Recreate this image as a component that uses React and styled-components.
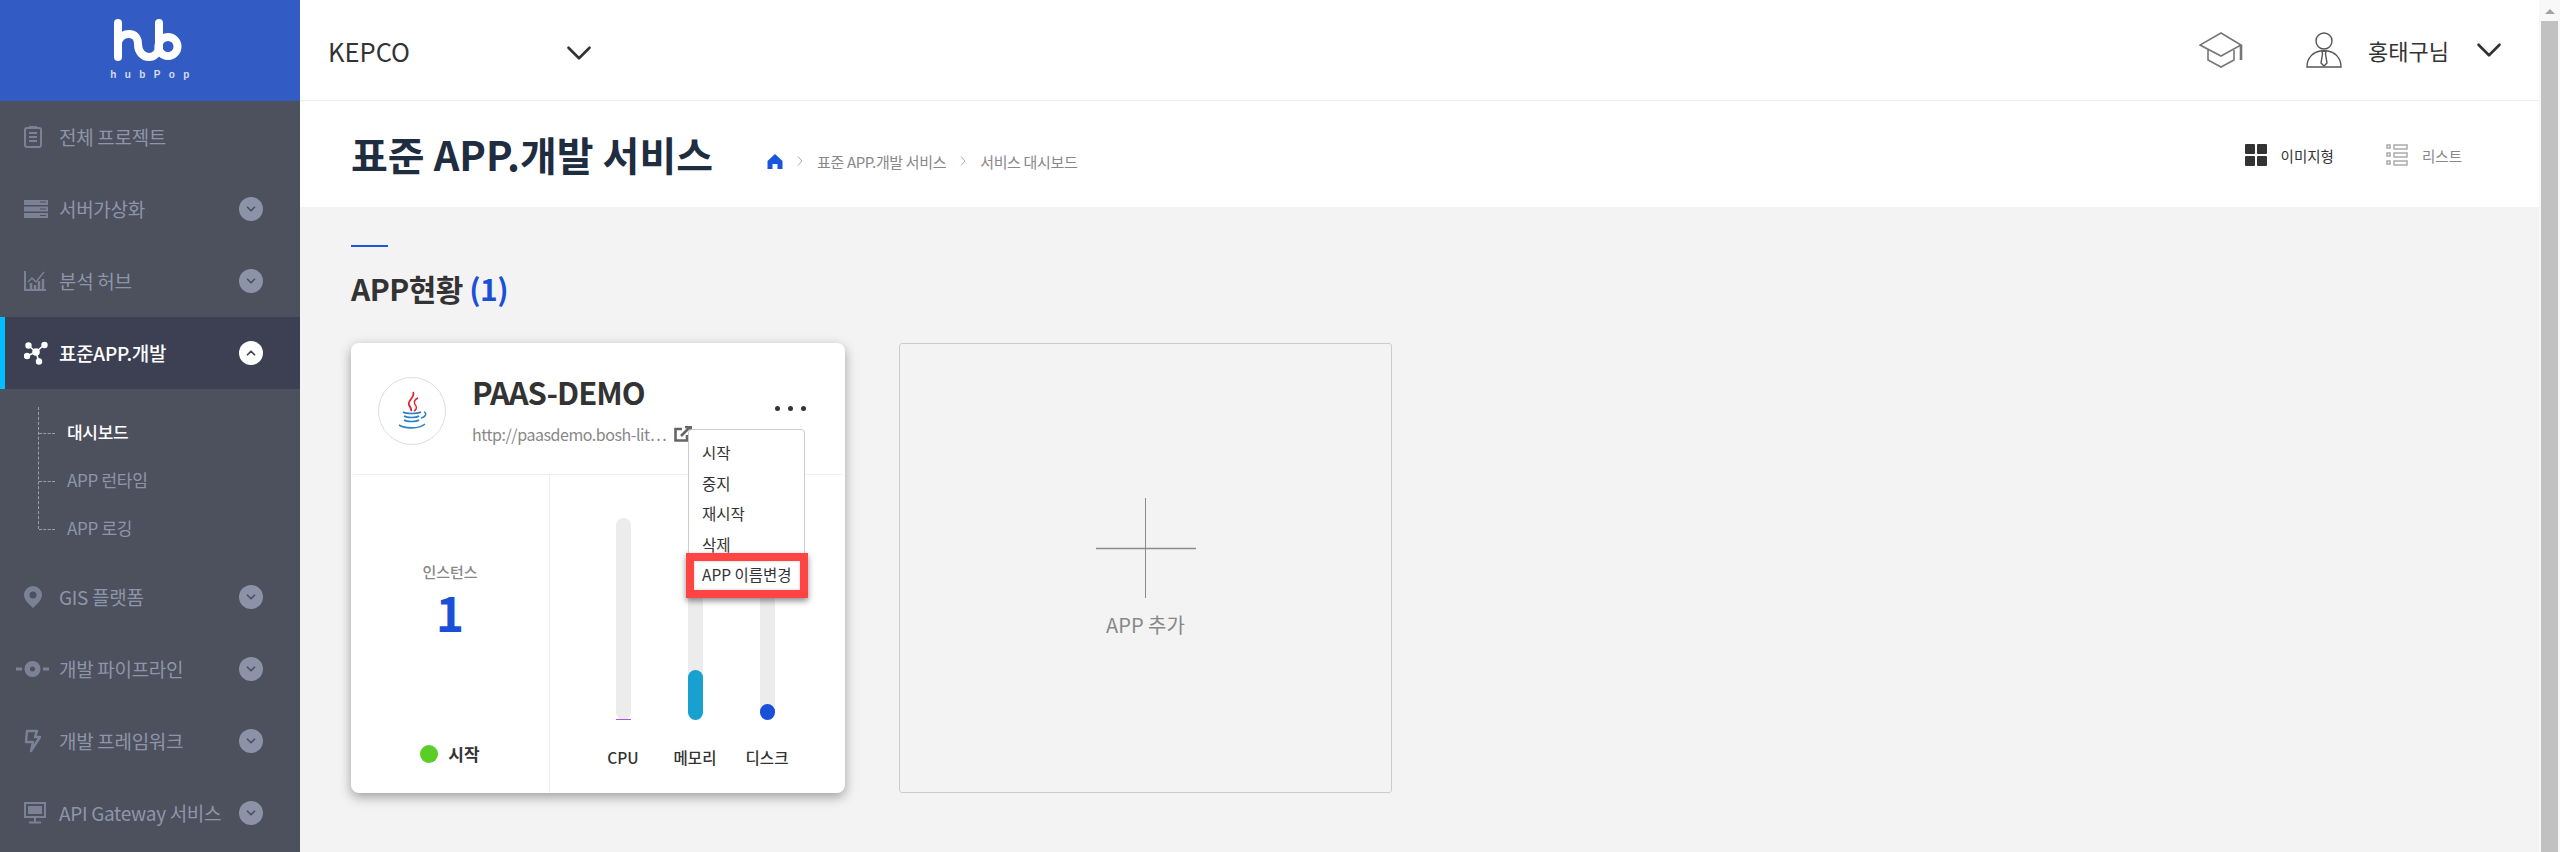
import React from 'react';
import styled, { createGlobalStyle } from 'styled-components';
import { ChevronDown, ChevronUp } from 'lucide-react';

const GlobalStyle = createGlobalStyle`
  html, body {
    margin: 0;
    height: 100%;
    overflow: hidden;
    font-family: 'Noto Sans CJK KR', 'Noto Sans', sans-serif;
    background: #f3f3f3;
  }
`;

const Page = styled.div`
  display: flex;
  width: 2560px;
  height: 852px;
  overflow: hidden;
`;

const Sidebar = styled.aside`
  width: 300px;
  flex: none;
  background: #4d515e;
`;

const LogoBox = styled.div`
  height: 101px;
  background: #325bc4;
  display: flex;
  flex-direction: column;
  align-items: center;
  padding-top: 19px;
  box-sizing: border-box;
`;

const LogoText = styled.div`
  font-family: 'Liberation Sans', sans-serif;
  font-size: 10px;
  line-height: 10px;
  letter-spacing: 8.4px;
  margin: 9px 0 0 8px;
  color: #d4dcf2;
  font-weight: 700;
`;

const MenuItem = styled.div`
  height: 72px;
  display: flex;
  align-items: center;
  position: relative;
  background: ${p => (p.$active ? '#3c4052' : 'transparent')};
  color: ${p => (p.$active ? '#fff' : '#8e95aa')};
  font-size: 19px;
  font-weight: ${p => (p.$active ? 500 : 400)};
  letter-spacing: -0.3px;
  &::before {
    content: '';
    position: absolute;
    left: 0;
    top: 0;
    bottom: 0;
    width: 5px;
    background: ${p => (p.$active ? '#00bfff' : 'transparent')};
  }
`;

const MenuIcon = styled.span`
  width: 59px;
  flex: none;
  display: flex;
  justify-content: flex-start;
  padding-left: ${p => (p.$wide ? '16px' : '24px')};
  box-sizing: border-box;
  color: ${p => (p.$active ? '#fff' : '#7c8296')};
`;

const MenuLabel = styled.span`
  flex: 1;
  white-space: nowrap;
  padding-bottom: 2px;
`;

const Toggle = styled.span`
  width: 24px;
  height: 24px;
  border-radius: 50%;
  margin-right: 37px;
  flex: none;
  display: flex;
  align-items: center;
  justify-content: center;
  background: ${p => (p.$active ? '#fff' : '#8c92a8')};
  color: ${p => (p.$active ? '#3c4052' : '#4d515e')};
`;

const SubMenu = styled.div`
  height: 172px;
  padding: 18px 0 0 38px;
  box-sizing: border-box;
`;

const SubRail = styled.div`
  border-left: 1px dashed #9a9fb0;
  height: 122px;
  display: flex;
  flex-direction: column;
`;

const SubItem = styled.div`
  height: 48px;
  flex: none;
  display: flex;
  align-items: center;
  font-size: 17px;
  letter-spacing: -0.3px;
  font-weight: ${p => (p.$active ? 500 : 400)};
  color: ${p => (p.$active ? '#fff' : '#8e95aa')};
  &::before {
    content: '';
    width: 16px;
    margin: 4px 12px 0 0;
    border-top: 1px dashed #9a9fb0;
  }
`;

const Main = styled.main`
  flex: 1;
  min-width: 0;
  display: flex;
  flex-direction: column;
`;

const TopBar = styled.header`
  height: 101px;
  flex: none;
  box-sizing: border-box;
  background: #fff;
  border-bottom: 1px solid #eee;
  display: flex;
  align-items: center;
  padding: 0 29px 0 28px;
`;

const OrgSelect = styled.div`
  width: 272px;
  display: flex;
  align-items: center;
  justify-content: space-between;
  font-size: 25.5px;
  color: #333;
  svg {
    margin-top: 6px;
  }
`;

const TopRight = styled.div`
  margin-left: auto;
  display: flex;
  align-items: center;
  color: #333;
`;

const HatSlot = styled.span`
  display: flex;
  margin-right: 63px;
`;

const UserName = styled.span`
  font-size: 22px;
  font-weight: 400;
  margin: 0 19px 0 26px;
`;

const TitleBand = styled.div`
  height: 106px;
  flex: none;
  background: #fff;
  display: flex;
  align-items: center;
  padding: 0 32px 0 51px;
`;

const PageTitle = styled.h1`
  margin: 0 54px 0 0;
  font-size: 40px;
  font-weight: 700;
  line-height: 1;
  color: #1f2d41;
`;

const Crumbs = styled.nav`
  display: flex;
  align-items: center;
  font-size: 15px;
  color: #888;
  letter-spacing: -0.35px;
  margin-top: 14px;
  gap: 14px;
`;

const Views = styled.div`
  margin-left: auto;
  margin-top: 2px;
  display: flex;
  align-items: center;
`;

const ViewLabel = styled.span`
  font-size: 14.5px;
  margin: 0 52px 0 14px;
  color: ${p => (p.$active ? '#333' : '#888')};
  &:last-child {
    margin-right: 45px;
  }
`;

const Content = styled.div`
  flex: 1;
  padding: 38px 51px 0;
  background: #f3f3f3;
`;

const Dash = styled.div`
  width: 37px;
  height: 2px;
  background: #1a56db;
`;

const SectionTitle = styled.h2`
  margin: 20px 0 34px;
  font-size: 30px;
  font-weight: 700;
  line-height: 42px;
  color: #333;
  letter-spacing: -0.5px;
  span {
    color: #1a4fd8;
  }
`;

const Cards = styled.div`
  display: flex;
  gap: 54px;
`;

const AppCard = styled.section`
  width: 494px;
  height: 450px;
  background: #fff;
  border-radius: 8px;
  box-shadow: 0 4px 12px rgba(0, 0, 0, 0.35);
  position: relative;
  display: flex;
  flex-direction: column;
`;

const CardHead = styled.div`
  height: 132px;
  flex: none;
  box-sizing: border-box;
  border-bottom: 1px solid #eee;
  margin: 0 2px;
  padding: 34px 25px 0;
  display: flex;
  align-items: flex-start;
`;

const LogoCircle = styled.div`
  width: 68px;
  height: 68px;
  flex: none;
  box-sizing: border-box;
  border: 1px solid #ddd;
  border-radius: 50%;
  display: flex;
  align-items: center;
  justify-content: center;
`;

const AppInfo = styled.div`
  margin: -3px 0 0 26px;
`;

const AppName = styled.div`
  font-size: 31px;
  font-weight: 700;
  line-height: 36px;
  color: #333;
  letter-spacing: -1px;
`;

const AppUrl = styled.div`
  display: flex;
  align-items: center;
  margin-top: 12px;
  font-size: 16px;
  line-height: 24px;
  color: #888;
  gap: 8px;
  letter-spacing: -0.45px;
  white-space: nowrap;
`;

const Dots = styled.div`
  position: absolute;
  top: 63px;
  left: 424px;
  display: flex;
  gap: 8px;
  i {
    width: 5px;
    height: 5px;
    border-radius: 50%;
    background: #333;
  }
`;

const DropMenu = styled.ul`
  position: absolute;
  left: 337px;
  top: 86px;
  width: 117px;
  margin: 0;
  padding: 7px 0 0 13px;
  list-style: none;
  box-sizing: border-box;
  background: #fff;
  border: 1px solid #ccc;
  border-radius: 4px;
  z-index: 2;
`;

const DropItem = styled.li`
  height: 30.5px;
  font-size: 15.5px;
  line-height: 30.5px;
  color: #333;
  white-space: nowrap;
`;

const Highlight = styled.div`
  position: absolute;
  left: 335px;
  top: 210px;
  width: 122px;
  height: 45px;
  box-sizing: border-box;
  border: 8px solid #ff4444;
  box-shadow: 0 3px 6px rgba(0, 0, 0, 0.45), inset 0 0 3px rgba(0, 0, 0, 0.2);
  z-index: 3;
`;

const CardBody = styled.div`
  flex: 1;
  display: flex;
  min-height: 0;
`;

const InstancePane = styled.div`
  width: 199px;
  flex: none;
  box-sizing: border-box;
  border-right: 1px solid #eee;
  display: flex;
  flex-direction: column;
  align-items: center;
  padding-top: 86px;
`;

const InstanceLabel = styled.div`
  font-size: 15px;
  font-weight: 500;
  line-height: 22px;
  color: #888;
`;

const InstanceCount = styled.div`
  font-size: 48px;
  font-weight: 700;
  line-height: 56px;
  color: #1a4fd8;
`;

const Status = styled.div`
  margin-top: 102px;
  display: flex;
  align-items: center;
  gap: 10px;
  font-size: 17px;
  font-weight: 700;
  color: #333;
  &::before {
    content: '';
    width: 18px;
    height: 18px;
    border-radius: 50%;
    background: #5acd26;
  }
`;

const MeterPane = styled.div`
  flex: 1;
  display: flex;
  padding: 43px 0 0 37px;
`;

const Meter = styled.div`
  width: 72px;
  display: flex;
  flex-direction: column;
  align-items: center;
`;

const Track = styled.div`
  width: 15px;
  height: 202px;
  flex: none;
  border-radius: 8px;
  background: #ececec;
  display: flex;
  align-items: flex-end;
`;

const Fill = styled.div`
  width: 100%;
  border-radius: ${p => (p.$flat ? 0 : '8px')};
  background: ${p => p.$color};
`;

const MeterLabel = styled.div`
  margin-top: 24px;
  font-size: 15.5px;
  line-height: 26px;
  font-weight: 500;
  color: #333;
`;

const AddCard = styled.section`
  width: 493px;
  height: 450px;
  box-sizing: border-box;
  border: 1px solid #ccc;
  border-radius: 3px;
  display: flex;
  flex-direction: column;
  align-items: center;
  padding-top: 154px;
`;

const AddLabel = styled.div`
  margin-top: 13px;
  font-size: 20px;
  line-height: 27px;
  color: #888;
`;

const Scrollbar = styled.div`
  width: 21px;
  flex: none;
  background: #f8f8f8;
  display: flex;
  flex-direction: column;
  align-items: center;
  &::before {
    content: '';
    margin-top: 9px;
    border-left: 5px solid transparent;
    border-right: 5px solid transparent;
    border-bottom: 5px solid #a3a3a3;
  }
`;

const ScrollThumb = styled.div`
  width: 17px;
  flex: 1;
  margin-top: 7px;
  background: #c1c1c1;
`;

const HubLogo = () => (
  <svg width="74" height="42" viewBox="0 0 74 42" fill="none" stroke="#fff" strokeWidth="8" strokeLinecap="round">
    <path d="M5 4V38" />
    <path d="M5 23C7 17 12 15 16 15C22 15 25 19 25 25C25 33 30 38 36 38C42 38 46 33 46 26V4" />
    <circle cx="55" cy="27.5" r="9.5" />
  </svg>
);

const ClipboardIcon = () => (
  <svg width="18" height="22" viewBox="0 0 18 22" fill="none" stroke="currentColor" strokeWidth="2">
    <rect x="1" y="2" width="16" height="19" rx="2" />
    <path d="M5 1h8M5 7h8M5 11h8M5 15h8" />
  </svg>
);

const ServerIcon = () => (
  <svg width="24" height="18" viewBox="0 0 24 18" fill="currentColor">
    <rect width="24" height="5" />
    <rect y="6.5" width="24" height="5" />
    <rect y="13" width="24" height="5" />
    <path d="M16 2h6M16 9h6M16 15.5h6" stroke="#4d515e" strokeWidth="1" />
  </svg>
);

const ChartIcon = () => (
  <svg width="22" height="20" viewBox="0 0 22 20" fill="none" stroke="currentColor" strokeWidth="2">
    <path d="M1 0V19H22" />
    <path d="M4 11L8 7L12 11L20 1" strokeWidth="1.5" />
    <path d="M7 19V12M11 19V14M15 19V10M19 19V8" strokeWidth="2.5" />
  </svg>
);

const NetworkIcon = () => (
  <svg width="24" height="24" viewBox="0 0 24 24" fill="currentColor" stroke="currentColor" strokeWidth="1.6">
    <path d="M12 11L5 5M12 11L20 4M12 11L3 15M12 11L15 21" fill="none" />
    <circle cx="12" cy="11" r="3" />
    <circle cx="4.5" cy="4.5" r="2.4" />
    <circle cx="20.5" cy="4" r="2.4" />
    <circle cx="3" cy="15" r="2.4" />
    <circle cx="15" cy="20.5" r="2.4" />
  </svg>
);

const PinIcon = () => (
  <svg width="18" height="22" viewBox="0 0 18 22">
    <path fill="currentColor" fillRule="evenodd" d="M9 0a9 9 0 0 1 9 9c0 5-5 9-9 13C5 18 0 14 0 9a9 9 0 0 1 9-9zm0 5.5a3.5 3.5 0 1 0 0 7 3.5 3.5 0 0 0 0-7z" />
  </svg>
);

const PipelineIcon = () => (
  <svg width="33" height="16" viewBox="0 0 33 16" fill="currentColor">
    <rect y="6.5" width="6" height="3" />
    <rect x="27" y="6.5" width="6" height="3" />
    <path fillRule="evenodd" d="M16.5 0a8 8 0 1 1 0 16 8 8 0 0 1 0-16zm0 5.5a2.5 2.5 0 1 0 0 5 2.5 2.5 0 0 0 0-5z" />
  </svg>
);

const BoltIcon = () => (
  <svg width="18" height="24" viewBox="0 0 18 24" fill="none" stroke="currentColor" strokeWidth="2.4" strokeLinejoin="round">
    <path d="M3 2H13L11 8H16L7 22L9 13H2Z" />
  </svg>
);

const MonitorIcon = () => (
  <svg width="22" height="22" viewBox="0 0 22 22" fill="none" stroke="currentColor" strokeWidth="2">
    <rect x="1" y="1" width="20" height="14" />
    <rect x="4" y="4" width="14" height="8" fill="currentColor" stroke="none" />
    <path d="M11 15V20M5 20.5H17" />
  </svg>
);

const HatIcon = () => (
  <svg width="44" height="36" viewBox="0 0 44 36" fill="none" stroke="#777" strokeWidth="1.6">
    <path d="M22 1L42 13L22 24L1 13Z" />
    <path d="M9 18V28L22 35L35 28V18" />
    <path d="M42 13V28" strokeWidth="2.6" />
  </svg>
);

const UserIcon = () => (
  <svg width="36" height="36" viewBox="0 0 36 36" fill="none" stroke="#555" strokeWidth="1.4">
    <circle cx="18" cy="9" r="8" />
    <path d="M1 35C1 25 8 20 14 19H22C28 20 35 25 35 35Z" />
    <path d="M16 19H20L19.5 22L21 31L18 34L15 31L16.5 22Z" />
  </svg>
);

const HomeIcon = () => (
  <svg width="16" height="15" viewBox="0 0 15 15" fill="#1a56db">
    <path d="M7.5 0L15 7V15H10V10H5V15H0V7Z" />
  </svg>
);

const CrumbArrow = () => (
  <svg width="6" height="10" viewBox="0 0 6 10" fill="none" stroke="#aaa" strokeWidth="1">
    <path d="M1 0.5L5 5L1 9.5" />
  </svg>
);

const GridIcon = () => (
  <svg width="22" height="22" viewBox="0 0 22 22" fill="#333">
    <rect width="10" height="10" rx="1" />
    <rect x="12" width="10" height="10" rx="1" />
    <rect y="12" width="10" height="10" rx="1" />
    <rect x="12" y="12" width="10" height="10" rx="1" />
  </svg>
);

const ListIcon = () => (
  <svg width="22" height="22" viewBox="0 0 22 22" fill="none" stroke="#aaa" strokeWidth="1.5">
    <rect x="1" y="1" width="3" height="3" />
    <rect x="1" y="9" width="3" height="3" />
    <rect x="1" y="17" width="3" height="3" />
    <rect x="8" y="1" width="13" height="4" />
    <rect x="8" y="9" width="13" height="4" />
    <rect x="8" y="17" width="13" height="4" />
  </svg>
);

const JavaIcon = () => (
  <svg width="30" height="40" viewBox="0 0 30 40" fill="none">
    <path d="M16 1C19 6 10 9 12 14C13 16 15 18 14 20" stroke="#e2252b" strokeWidth="1.8" />
    <path d="M21 7C16 9 17 13 19 15C20 17 19 19 17 20" stroke="#e2252b" strokeWidth="1.4" />
    <path d="M6 21C9 23 20 23 24 21M27 21C30 22 29 26 24 27M7 25C10 27 19 27 22 25M7 29C10 31 19 31 22 29M2 34C8 38 22 38 28 33" stroke="#2f80c4" strokeWidth="1.6" />
  </svg>
);

const ExternalIcon = () => (
  <svg width="18" height="16" viewBox="0 0 18 16" fill="none" stroke="#666" strokeWidth="2.6">
    <path d="M8 3H1.5V14.5H13V9" />
    <path d="M7 10L15 2M11 1H17V6" />
  </svg>
);

const PlusIcon = () => (
  <svg width="100" height="100" viewBox="0 0 100 100" stroke="#8a8a8a" fill="none">
    <path d="M49.5 0V100" strokeWidth="1" />
    <path d="M0 50.5H100" strokeWidth="1.4" />
  </svg>
);

const menuTop = [
  { label: '전체 프로젝트', icon: <ClipboardIcon />, noToggle: true },
  { label: '서버가상화', icon: <ServerIcon /> },
  { label: '분석 허브', icon: <ChartIcon /> },
];

const menuBottom = [
  { label: 'GIS 플랫폼', icon: <PinIcon /> },
  { label: '개발 파이프라인', icon: <PipelineIcon />, wide: true },
  { label: '개발 프레임워크', icon: <BoltIcon /> },
  { label: 'API Gateway 서비스', icon: <MonitorIcon /> },
];

const meters = [
  { label: 'CPU', height: 1, color: '#b04fd8', flat: true },
  { label: '메모리', height: 50, color: '#18a0d0' },
  { label: '디스크', height: 16, color: '#1a4fd8' },
];

const dropItems = ['시작', '중지', '재시작', '삭제', 'APP 이름변경'];

const NavRow = ({ item }) => (
  <MenuItem>
    <MenuIcon $wide={item.wide}>{item.icon}</MenuIcon>
    <MenuLabel>{item.label}</MenuLabel>
    {!item.noToggle && (
      <Toggle>
        <ChevronDown size={14} strokeWidth={3} />
      </Toggle>
    )}
  </MenuItem>
);

export default function App() {
  return (
    <Page>
      <GlobalStyle />
      <Sidebar>
        <LogoBox>
          <HubLogo />
          <LogoText>hubPop</LogoText>
        </LogoBox>
        {menuTop.map(item => (
          <NavRow key={item.label} item={item} />
        ))}
        <MenuItem $active>
          <MenuIcon $active><NetworkIcon /></MenuIcon>
          <MenuLabel>표준APP.개발</MenuLabel>
          <Toggle $active>
            <ChevronUp size={14} strokeWidth={3} />
          </Toggle>
        </MenuItem>
        <SubMenu>
          <SubRail>
            <SubItem $active>대시보드</SubItem>
            <SubItem>APP 런타임</SubItem>
            <SubItem>APP 로깅</SubItem>
          </SubRail>
        </SubMenu>
        {menuBottom.map(item => (
          <NavRow key={item.label} item={item} />
        ))}
      </Sidebar>
      <Main>
        <TopBar>
          <OrgSelect>
            KEPCO
            <ChevronDown size={42} strokeWidth={1.5} />
          </OrgSelect>
          <TopRight>
            <HatSlot><HatIcon /></HatSlot>
            <UserIcon />
            <UserName>홍태구님</UserName>
            <ChevronDown size={42} strokeWidth={1.5} />
          </TopRight>
        </TopBar>
        <TitleBand>
          <PageTitle>표준 APP.개발 서비스</PageTitle>
          <Crumbs>
            <HomeIcon />
            <CrumbArrow />
            <span>표준 APP.개발 서비스</span>
            <CrumbArrow />
            <span>서비스 대시보드</span>
          </Crumbs>
          <Views>
            <GridIcon />
            <ViewLabel $active>이미지형</ViewLabel>
            <ListIcon />
            <ViewLabel>리스트</ViewLabel>
          </Views>
        </TitleBand>
        <Content>
          <Dash />
          <SectionTitle>APP현황 <span>(1)</span></SectionTitle>
          <Cards>
            <AppCard>
              <CardHead>
                <LogoCircle><JavaIcon /></LogoCircle>
                <AppInfo>
                  <AppName>PAAS-DEMO</AppName>
                  <AppUrl>
                    http://paasdemo.bosh-lit⋯
                    <ExternalIcon />
                  </AppUrl>
                </AppInfo>
              </CardHead>
              <Dots><i /><i /><i /></Dots>
              <DropMenu>
                {dropItems.map(text => (
                  <DropItem key={text}>{text}</DropItem>
                ))}
              </DropMenu>
              <Highlight />
              <CardBody>
                <InstancePane>
                  <InstanceLabel>인스턴스</InstanceLabel>
                  <InstanceCount>1</InstanceCount>
                  <Status>시작</Status>
                </InstancePane>
                <MeterPane>
                  {meters.map(m => (
                    <Meter key={m.label}>
                      <Track>
                        <Fill $color={m.color} $flat={m.flat} style={{ height: m.height }} />
                      </Track>
                      <MeterLabel>{m.label}</MeterLabel>
                    </Meter>
                  ))}
                </MeterPane>
              </CardBody>
            </AppCard>
            <AddCard>
              <PlusIcon />
              <AddLabel>APP 추가</AddLabel>
            </AddCard>
          </Cards>
        </Content>
      </Main>
      <Scrollbar>
        <ScrollThumb />
      </Scrollbar>
    </Page>
  );
}
